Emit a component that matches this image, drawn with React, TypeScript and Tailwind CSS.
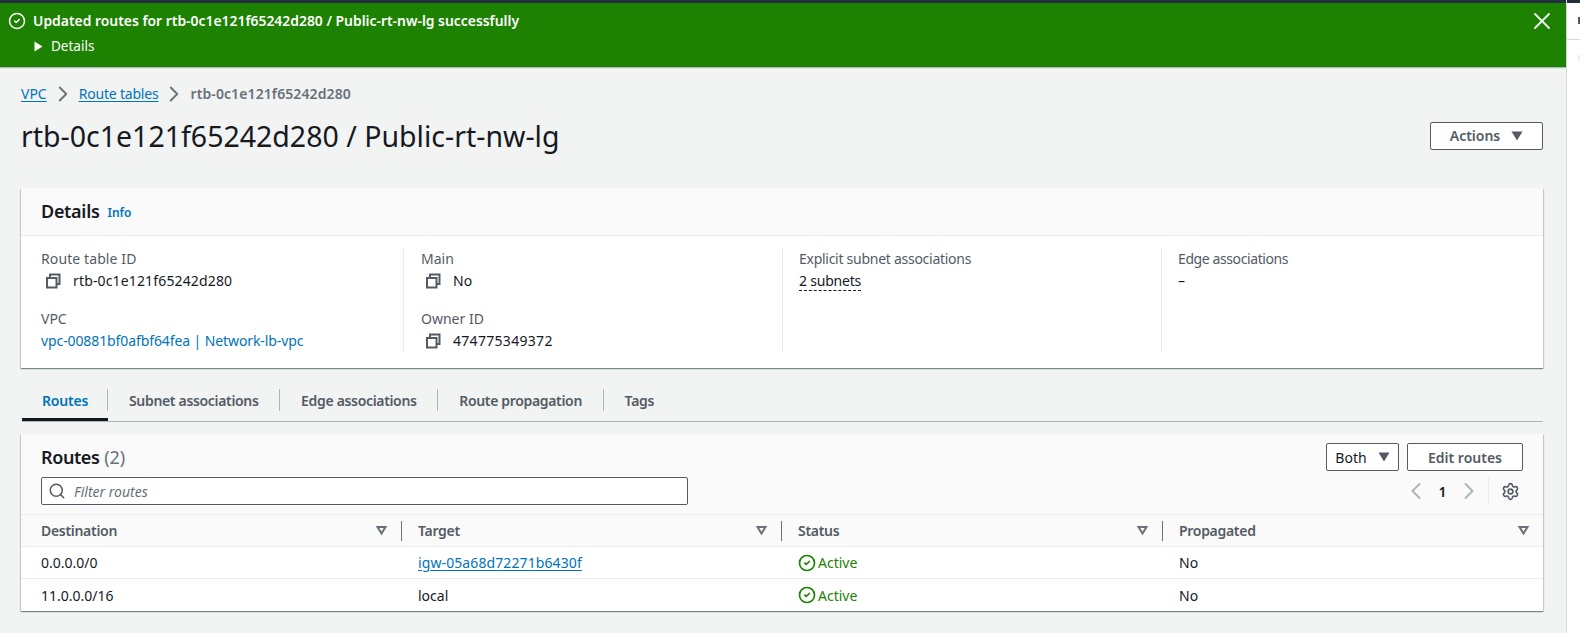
import { ChevronLeft, ChevronRight, CircleCheck, Search, Settings, X } from "lucide-react";

const font = { fontFamily: '"Noto Sans", "Open Sans", sans-serif' };

const cardShadow = "shadow-[0_1px_1px_0_rgba(0,28,36,0.3),1px_1px_1px_0_rgba(0,28,36,0.15),-1px_1px_1px_0_rgba(0,28,36,0.15)]";

const CopyIcon = () => (
  <svg width="16" height="16" viewBox="0 0 16 16" fill="none" stroke="#545b64" strokeWidth="2" className="shrink-0">
    <path d="M5 5h6.5v9.5H2V5z" />
    <path d="M5 5V1.5h9.5V11H11.500" />
  </svg>
);

const Caret = ({ className = "" }: { className?: string }) => (
  <svg width="12" height="10" viewBox="0 0 12 10" className={className}>
    <path d="M0.500 0.500h11L6 9.500z" fill="#545b64" />
  </svg>
);

const SortCaret = () => (
  <svg width="11" height="9" viewBox="0 0 11 9" fill="none" stroke="#687078" strokeWidth="2">
    <path d="M1.500 1h8L5.500 7.500z" />
  </svg>
);

const Field = ({ label, labelClass = "", children }: { label: string; labelClass?: string; children: React.ReactNode }) => (
  <div className="h-[42px]">
    <div className={`text-[14px] leading-[20px] text-[#545b64] ${labelClass}`}>{label}</div>
    <div className="text-[14px] leading-[20px] text-[#16191f] mt-[2px]">{children}</div>
  </div>
);

const Copyable = ({ value, valueClass = "" }: { value: string; valueClass?: string }) => (
  <div className="flex items-center gap-[12px] pl-[4px]">
    <CopyIcon />
    <span className={valueClass}>{value}</span>
  </div>
);

const Status = () => (
  <div className="flex items-center gap-[2px] text-[#1d8102]">
    <CircleCheck size={18} strokeWidth={2.2} />
    <span>Active</span>
  </div>
);

const Row = ({ cells, last }: { cells: React.ReactNode[]; last?: boolean }) => (
  <div className={`grid grid-cols-[380px_380px_381px_1fr] h-[32px] items-center text-[14px] text-[#16191f] ${last ? "" : "border-b border-[#eaeded]"}`}>
    {cells.map((c, i) => (
      <div key={i} className={i === 0 ? "pl-[20px]" : "pl-[17px]"}>
        {c}
      </div>
    ))}
  </div>
);

const tabs = ["Subnet associations", "Edge associations", "Route propagation", "Tags"];
const headers = ["Destination", "Target", "Status", "Propagated"];

export default function App() {
  return (
    <div className="flex w-[1580px] h-[633px] overflow-hidden bg-white" style={font}>
      <div className="w-[1567px] shrink-0 h-full bg-[#f2f3f3] border-r border-[#d5dbdb]">
        <div className="h-[3px] bg-[#232f3e]" />
        <div className="h-[64px] bg-[#1d8102] text-white flex justify-between pl-[8px] pr-[10px] shadow-[0_1px_1px_#aab7b8]">
          <div>
            <div className="flex items-center gap-[7px] pt-[5px] h-[31px]">
              <CircleCheck size={18} strokeWidth={2} />
              <span className="text-[13.900px] font-semibold leading-[18px]">
                Updated routes for rtb-0c1e121f65242d280 / Public-rt-nw-lg successfully
              </span>
            </div>
            <div className="flex items-center gap-[8px] pl-[26px] mt-[2px] h-[20px] text-[13.500px]">
              <svg width="9" height="11" viewBox="0 0 9 11">
                <path d="M0.500 0.500L8.500 5.500L0.500 10.500z" fill="#fff" />
              </svg>
              <span>Details</span>
            </div>
          </div>
          <X size={28} strokeWidth={1.7} className="mt-[4px] text-[#eaeded]" />
        </div>

        <div className="pl-[21px] pr-[23px]">
          <div className="flex items-center h-[20px] mt-[17px] text-[14px] leading-[20px]">
            <a className="text-[#0073bb] underline underline-offset-2">VPC</a>
            <ChevronRight size={26} strokeWidth={1.7} className="text-[#687078] mx-[3px]" />
            <a className="text-[#0073bb] underline underline-offset-2 tracking-[-0.2px]">Route tables</a>
            <ChevronRight size={26} strokeWidth={1.7} className="text-[#687078] mx-[3px]" />
            <span className="text-[#687078] font-semibold tracking-[0.1px]">rtb-0c1e121f65242d280</span>
          </div>

          <div className="flex items-center justify-between h-[36px] mt-[14px]">
            <h1 className="text-[28.500px] leading-[36px] text-[#16191f]">rtb-0c1e121f65242d280 / Public-rt-nw-lg</h1>
            <button className="w-[113px] h-[28px] pb-[2px] flex items-center justify-center gap-[11px] bg-white border border-[#545b64] rounded-[2px] text-[14px] font-semibold text-[#545b64]">
              Actions
              <Caret className="mt-[2px]" />
            </button>
          </div>

          {/* details card */}
          <div className={`mt-[34px] h-[180px] bg-white ${cardShadow}`}>
            <div className="h-[48px] bg-[#fafafa] border-b border-[#eaeded] flex items-center pl-[20px] gap-[8px]">
              <span className="text-[18px] font-semibold text-[#16191f] tracking-[-0.3px]">Details</span>
              <span className="text-[12px] font-semibold text-[#0073bb] mt-[3px]">Info</span>
            </div>
            <div className="grid grid-cols-[382px_379px_379px_1fr] pt-[12px]">
              <div className="h-[104px] pt-[1px] pl-[20px] flex flex-col gap-[18px]">
                <Field label="Route table ID" labelClass="tracking-[0.1px]">
                  <Copyable value="rtb-0c1e121f65242d280" valueClass="tracking-[0.15px]" />
                </Field>
                <Field label="VPC">
                  <span className="text-[#0073bb] tracking-[-0.1px]">vpc-00881bf0afbf64fea | Network-lb-vpc</span>
                </Field>
              </div>
              <div className="h-[104px] pt-[1px] pl-[17px] border-l border-[#eaeded] flex flex-col gap-[18px]">
                <Field label="Main"><Copyable value="No" /></Field>
                <Field label="Owner ID"><Copyable value="474775349372" valueClass="tracking-[0.3px]" /></Field>
              </div>
              <div className="h-[104px] pt-[1px] pl-[16px] border-l border-[#eaeded]">
                <Field label="Explicit subnet associations" labelClass="tracking-[-0.27px]">
                  <span className="border-b border-dashed border-[#16191f] tracking-[-0.2px]">2 subnets</span>
                </Field>
              </div>
              <div className="h-[104px] pt-[1px] pl-[16px] border-l border-[#eaeded]">
                <Field label="Edge associations" labelClass="tracking-[-0.4px]">–</Field>
              </div>
            </div>
          </div>

          {/* tabs */}
          <div className="mt-[17px] h-[37px] ml-[1px] border-b border-[#aab7b8] flex items-start">
            <div className="h-[36px] w-[86px] border-b-[3px] border-[#16191f]">
              <div className="h-[22px] mt-[4px] pl-[20px] border-r border-[#aab7b8] flex items-center text-[14px] font-semibold text-[#0073bb] tracking-[-0.2px]">
                Routes
              </div>
            </div>
            {tabs.map((t, i) => (
              <div
                key={t}
                className={`h-[22px] mt-[4px] pl-[21px] pr-[20.600px] flex items-center text-[14px] font-semibold text-[#545b64] tracking-[-0.33px] ${
                  i < tabs.length - 1 ? "border-r border-[#aab7b8]" : ""
                }`}
              >
                {t}
              </div>
            ))}
          </div>

          {/* routes card */}
          <div className={`mt-[12px] h-[177px] bg-white ${cardShadow}`}>
            <div className="h-[81px] bg-[#fafafa] border-b border-[#eaeded] pl-[20px] pr-[20px] flex justify-between">
              <div>
                <div className="text-[18px] leading-[24px] font-semibold text-[#16191f] mt-[11px]">
                  <span className="tracking-[-0.4px]">Routes</span> <span className="font-normal text-[#687078]">(2)</span>
                </div>
                <div className="w-[647px] h-[28px] mt-[8px] bg-white border border-[#545b64] rounded-[2px] flex items-center pl-[6px] gap-[8px]">
                  <Search size={18} strokeWidth={2} className="text-[#545b64]" />
                  <span className="text-[14px] italic text-[#687078]">Filter routes</span>
                </div>
              </div>
              <div className="flex flex-col items-end">
                <div className="flex gap-[8px] mt-[9px]">
                  <button className="w-[73px] h-[28px] flex items-center justify-center gap-[11px] bg-white border border-[#545b64] rounded-[2px] text-[14px] text-[#16191f]">
                    Both
                    <Caret />
                  </button>
                  <button className="w-[116px] h-[28px] bg-white border border-[#545b64] rounded-[2px] text-[14px] font-semibold text-[#545b64]">
                    Edit routes
                  </button>
                </div>
                <div className="flex items-center h-[28px] mt-[6px] pr-[3px]">
                  <ChevronLeft size={28} strokeWidth={1.7} className="text-[#aab7b8]" />
                  <span className="w-[25px] text-center text-[14px] font-semibold text-[#16191f]">1</span>
                  <ChevronRight size={28} strokeWidth={1.7} className="text-[#aab7b8]" />
                  <div className="w-px h-[28px] bg-[#eaeded] ml-[5px] mr-[12px]" />
                  <Settings size={19} strokeWidth={2} className="text-[#545b64]" />
                </div>
              </div>
            </div>
            <div className="grid grid-cols-[380px_380px_381px_1fr] h-[32px] bg-[#fafafa] border-b border-[#eaeded] items-center">
              {headers.map((h, i) => (
                <div key={h} className={`flex items-center justify-between h-[20px] ${i === 0 ? "pl-[20px]" : "pl-[16px]"} pr-[14px] ${i > 0 ? "border-l border-[#687078]" : ""}`}>
                  <span className="text-[14px] font-semibold text-[#545b64] tracking-[-0.3px]">{h}</span>
                  <SortCaret />
                </div>
              ))}
            </div>
            <Row cells={["0.0.0.0/0", <a className="text-[#0073bb] underline underline-offset-2 tracking-[0.1px]">igw-05a68d72271b6430f</a>, <Status />, "No"]} />
            <Row last cells={["11.0.0.0/16", "local", <Status />, "No"]} />
          </div>
        </div>
      </div>

      <div className="flex-1 h-full bg-white">
        <div className="h-[3px] bg-[#232f3e]" />
        <div className="h-[37px] border-b border-[#d5dbdb] pt-[14px] pl-[11px]">
          <div className="w-[2px] h-[7px] bg-[#545b64]" />
        </div>
        <div className="w-[2px] h-[6px] ml-[11px] mt-[15px] bg-[#eaeded]" />
      </div>
    </div>
  );
}
